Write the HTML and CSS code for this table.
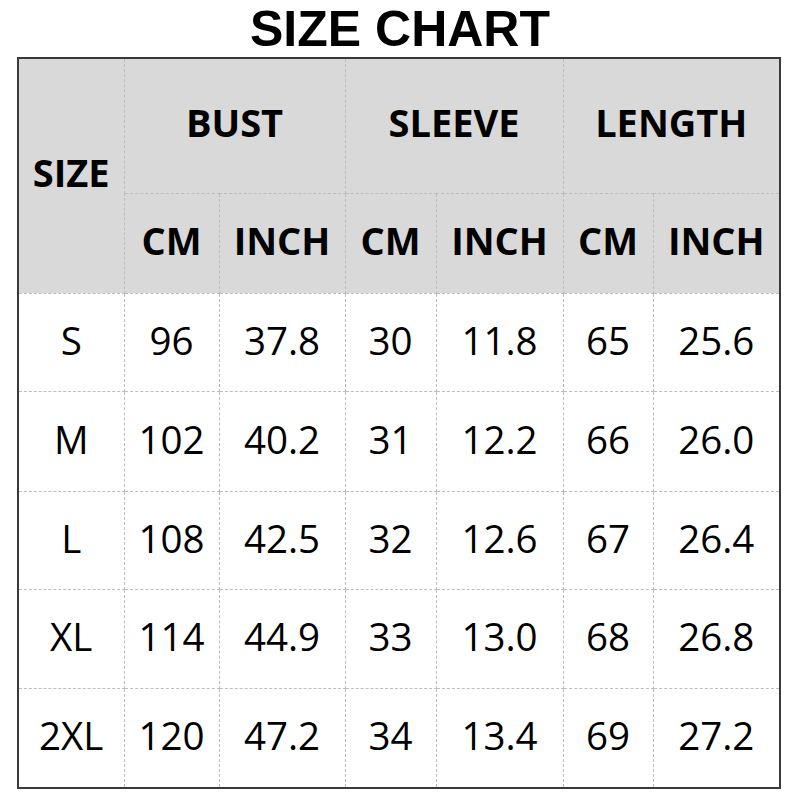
FILE: index.html
```html
<!DOCTYPE html>
<html>
<head>
<meta charset="utf-8">
<link rel="stylesheet" href="styles.css">
</head>
<body>
<h1 class="title">SIZE CHART</h1>
<table class="chart">
  <colgroup>
    <col class="c1"><col class="c2"><col class="c3"><col class="c4"><col class="c5"><col class="c6"><col class="c7">
  </colgroup>
  <thead>
    <tr class="h1">
      <th rowspan="2">SIZE</th>
      <th colspan="2">BUST</th>
      <th colspan="2">SLEEVE</th>
      <th colspan="2">LENGTH</th>
    </tr>
    <tr class="h2">
      <th>CM</th><th>INCH</th><th>CM</th><th>INCH</th><th>CM</th><th>INCH</th>
    </tr>
  </thead>
  <tbody>
    <tr class="r1"><td>S</td><td>96</td><td>37.8</td><td>30</td><td>11.8</td><td>65</td><td>25.6</td></tr>
    <tr class="r2"><td>M</td><td>102</td><td>40.2</td><td>31</td><td>12.2</td><td>66</td><td>26.0</td></tr>
    <tr class="r3"><td>L</td><td>108</td><td>42.5</td><td>32</td><td>12.6</td><td>67</td><td>26.4</td></tr>
    <tr class="r4"><td>XL</td><td>114</td><td>44.9</td><td>33</td><td>13.0</td><td>68</td><td>26.8</td></tr>
    <tr class="r5"><td>2XL</td><td>120</td><td>47.2</td><td>34</td><td>13.4</td><td>69</td><td>27.2</td></tr>
  </tbody>
</table>
</body>
</html>
```
FILE: styles.css
```css
html, body {
  margin: 0;
  padding: 0;
  background: #ffffff;
}
.title {
  margin: 0;
  padding-top: 2px;
  height: 55px;
  line-height: 55px;
  text-align: center;
  font-family: "Liberation Sans", Arial, sans-serif;
  font-weight: bold;
  font-size: 50px;
  color: #000;
}
.chart {
  margin-left: 17px;
  width: 762px;
  table-layout: fixed;
  border-collapse: collapse;
  border: 2px solid #3a3a3a;
  font-family: "Open Sans", "DejaVu Sans", sans-serif;
  color: #000;
}
.c1 { width: 106px; }
.c2 { width: 95px; }
.c3 { width: 126px; }
.c4 { width: 91px; }
.c5 { width: 127px; }
.c6 { width: 90px; }
.c7 { width: 127px; }
.chart th, .chart td {
  border: 1px dashed #bdbdbd;
  padding: 0;
  text-align: center;
  vertical-align: middle;
  white-space: nowrap;
}
.chart th {
  background: #d9d9d9;
  font-weight: bold;
  font-size: 38px;
  padding-bottom: 7px;
}
.chart td {
  font-size: 38.5px;
  font-weight: normal;
  padding-bottom: 5px;
}
.h1 { height: 135px; }
.h2 { height: 100px; }
.r1 { height: 98px; }
.r2 { height: 100px; }
.r3 { height: 98px; }
.r4 { height: 99px; }
.r5 { height: 100px; }
```
